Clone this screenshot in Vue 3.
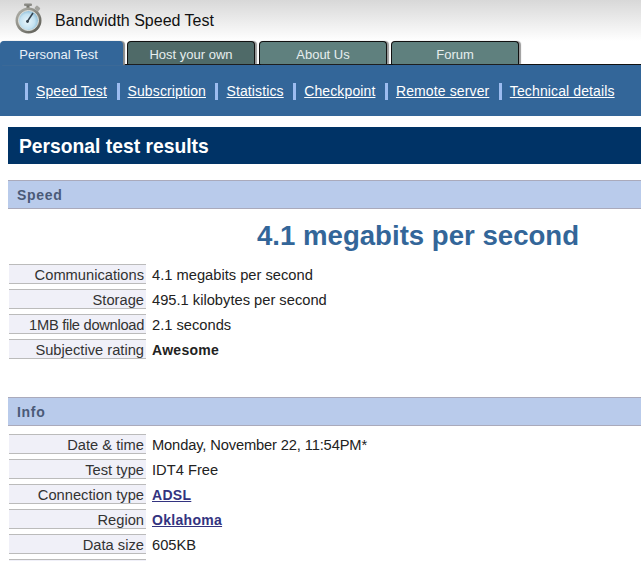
<template>
  <div class="page">
    <header class="top">
      <svg class="watch" width="28" height="31" viewBox="0 0 28 31">
        <defs>
          <radialGradient id="face" cx="0.45" cy="0.55" r="0.6">
            <stop offset="0" stop-color="#eaf6fb" />
            <stop offset="0.6" stop-color="#c4e2f1" />
            <stop offset="1" stop-color="#7fb4d3" />
          </radialGradient>
          <linearGradient id="rim" x1="0" y1="0" x2="1" y2="1">
            <stop offset="0" stop-color="#b8b8b0" />
            <stop offset="1" stop-color="#55554e" />
          </linearGradient>
        </defs>
        <rect x="9" y="0.5" width="8" height="2.5" rx="1" fill="#8b8b86" />
        <rect x="11.5" y="2.5" width="3" height="4" fill="#77776f" />
        <rect x="20" y="3" width="5" height="4" rx="1" transform="rotate(40 22 5)" fill="#a3a39e" />
        <circle cx="13.5" cy="17.5" r="13" fill="url(#rim)" />
        <circle cx="13.5" cy="17.5" r="10" fill="url(#face)" stroke="#e4e4de" stroke-width="1" />
        <path d="M12 19 L18 10" stroke="#33414d" stroke-width="1.5" />
        <circle cx="12.5" cy="18.5" r="1.4" fill="#33414d" />
      </svg>
      <span class="brand">Bandwidth Speed Test</span>
    </header>

    <nav class="tabs">
      <a v-for="(tab, i) in tabs" :key="tab" class="tab" :class="{ active: i === 0, dark: i === 1 }">{{ tab }}</a>
    </nav>

    <div class="subnav">
      <a v-for="link in links" :key="link" class="sublink"><span>{{ link }}</span></a>
    </div>

    <main class="content">
      <h1 class="title">Personal test results</h1>

      <h2 class="section">Speed</h2>
      <div class="big">4.1 megabits per second</div>
      <div class="rows">
        <div v-for="row in speedRows" :key="row.label" class="row">
          <div class="label" :class="{ tight: row.tight }">{{ row.label }}</div>
          <div class="value" :class="{ bold: row.bold }">{{ row.value }}</div>
        </div>
      </div>

      <h2 class="section info">Info</h2>
      <div class="rows">
        <div v-for="row in infoRows" :key="row.label" class="row">
          <div class="label">{{ row.label }}</div>
          <div class="value" :class="{ narrow: row.narrow }">
            <a v-if="row.link" class="vlink">{{ row.value }}</a>
            <template v-else>{{ row.value }}</template>
          </div>
        </div>
        <div class="row"><div class="label"></div></div>
      </div>
    </main>
  </div>
</template>

<script setup>
const tabs = ['Personal Test', 'Host your own', 'About Us', 'Forum']
const links = ['Speed Test', 'Subscription', 'Statistics', 'Checkpoint', 'Remote server', 'Technical details']

const speedRows = [
  { label: 'Communications', value: '4.1 megabits per second' },
  { label: 'Storage', value: '495.1 kilobytes per second' },
  { label: '1MB file download', value: '2.1 seconds', tight: true },
  { label: 'Subjective rating', value: 'Awesome', bold: true },
]

const infoRows = [
  { label: 'Date & time', value: 'Monday, November 22, 11:54PM*', narrow: true },
  { label: 'Test type', value: 'IDT4 Free' },
  { label: 'Connection type', value: 'ADSL', link: true },
  { label: 'Region', value: 'Oklahoma', link: true },
  { label: 'Data size', value: '605KB' },
]
</script>

<style>
html, body { margin: 0; background: #fff; overflow: hidden; }
</style>

<style scoped>
.page {
  width: 641px;
  height: 561px;
  overflow: hidden;
  font-family: "Liberation Sans", Arial, sans-serif;
  font-size: 14px;
  color: #222;
}
.top {
  height: 41px;
  display: flex;
  align-items: center;
  padding-left: 15px;
  box-sizing: border-box;
  background: linear-gradient(#d8d8d8, #fff);
}
.watch { margin-right: 12px; margin-top: -5px; }
.brand { font-size: 16px; color: #111; }
.tabs {
  height: 24px;
  display: flex;
  gap: 4px;
  box-sizing: border-box;
  border-bottom: 1px solid #111;
}
.tab {
  width: 128px;
  height: 23px;
  box-sizing: border-box;
  border: 1px solid #111;
  border-bottom: 0;
  border-radius: 4px 4px 0 0;
  background: #5f807e;
  color: #e6eeee;
  font-size: 13px;
  line-height: 25px;
  text-align: center;
  box-shadow: 2px 0 1px #999;
}
.tab.dark { background: #4f6a68; }
.tab.active {
  width: 123px;
  height: 24px;
  padding-right: 6px;
  background: #336699;
  border-color: #336699;
  color: #e8f0f8;
  position: relative;
  z-index: 1;
  box-shadow: 2px 0 1px #888;
}
.subnav {
  height: 51px;
  background: #336699;
  display: flex;
  align-items: center;
  padding: 2px 0 0 25px;
  box-sizing: border-box;
}
.sublink {
  border-left: 3px solid #9cbcf0;
  padding-left: 8px;
  margin-right: 9.5px;
  height: 17px;
  line-height: 17px;
  color: #fff;
  font-size: 14px;
  letter-spacing: 0.12px;
  white-space: nowrap;
}
.sublink span { text-decoration: underline; }
.content { padding: 11px 0 0 8px; }
.title {
  margin: 0;
  height: 37px;
  padding-left: 11px;
  background: #003366;
  color: #fff;
  font-size: 19.3px;
  font-weight: 700;
  line-height: 39px;
  white-space: nowrap;
}
.section {
  margin: 16px 0 0;
  height: 29px;
  box-sizing: border-box;
  padding-left: 9px;
  background: #b9cbeb;
  border-top: 1px solid #aab;
  border-bottom: 1px solid #aab;
  color: #4a5a78;
  font-size: 14px;
  font-weight: 700;
  letter-spacing: 0.7px;
  line-height: 29px;
}
.section.info { margin-top: 38px; }
.big {
  height: 55px;
  padding-left: 249px;
  color: #336699;
  font-size: 27.6px;
  font-weight: 700;
  line-height: 54px;
  white-space: nowrap;
}
.rows { display: flex; flex-direction: column; gap: 5px; }
.section.info + .rows { margin-top: 8px; }
.row { display: flex; height: 20px; }
.label {
  width: 137px;
  margin-left: 1px;
  box-sizing: border-box;
  padding-right: 2px;
  background: #f0f0f8;
  border-top: 1px solid #bbb;
  border-bottom: 1px solid #bbb;
  text-align: right;
  font-size: 14.7px;
  line-height: 20px;
  color: #333;
  white-space: nowrap;
}
.label.tight { letter-spacing: -0.3px; }
.value {
  margin-left: 6px;
  font-size: 14.7px;
  line-height: 22px;
  white-space: nowrap;
}
.value.narrow { letter-spacing: -0.14px; }
.bold { font-size: 14px; font-weight: 700; letter-spacing: 0.3px; }
.vlink {
  color: #333380;
  font-size: 14px;
  font-weight: 700;
  text-decoration: underline;
  letter-spacing: 0.3px;
}
</style>
